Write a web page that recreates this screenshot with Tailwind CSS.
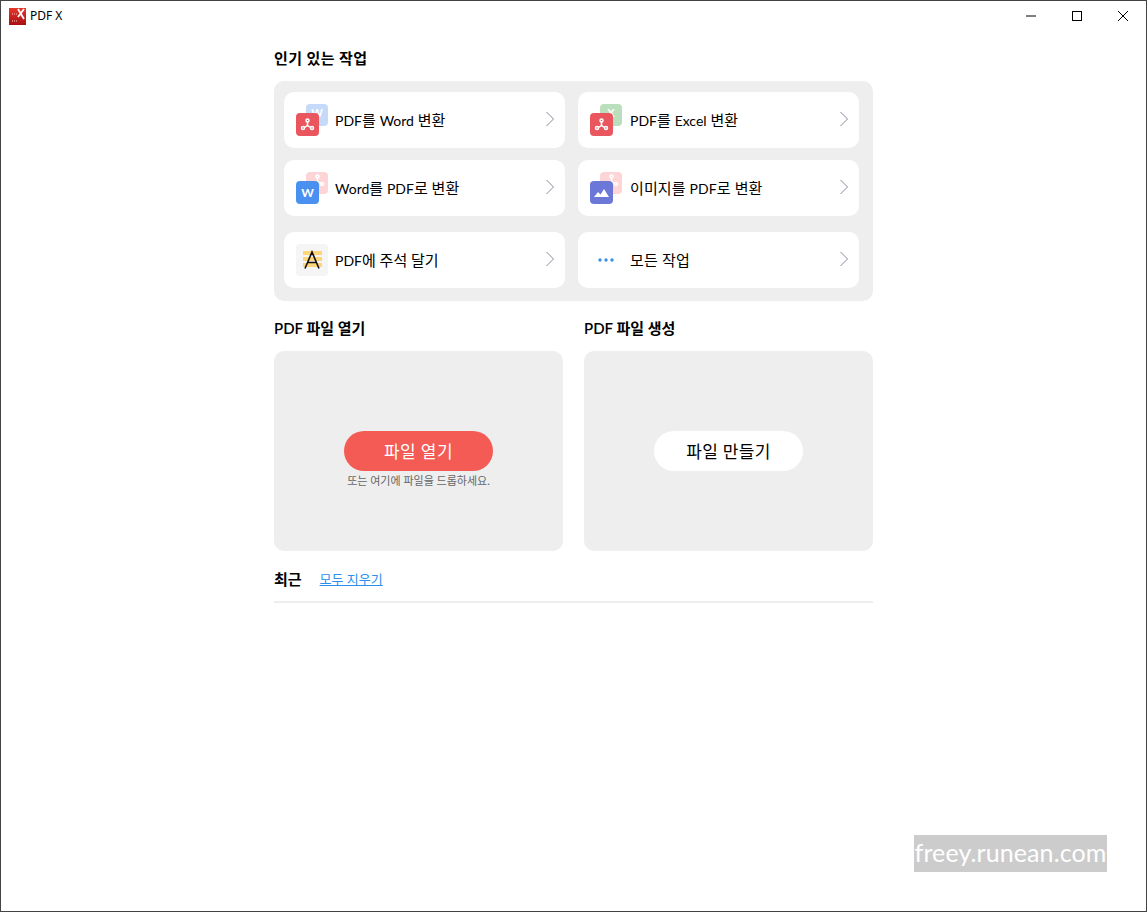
<!doctype html>
<html lang="ko">
<head>
<meta charset="utf-8">
<script src="https://cdn.jsdelivr.net/npm/@tailwindcss/browser@4"></script>
</head>
<body class="bg-white">
<div class="relative w-[1147px] h-[912px] overflow-hidden bg-white border border-[#444444] text-black font-['Lato','Noto_Sans_CJK_KR',sans-serif]">
  <header class="flex items-center h-[30px]">
    <svg class="ml-[8px] w-[17px] h-[17px]" viewBox="0 0 17 17">
      <defs><linearGradient id="g" x1="0" y1="0" x2="0" y2="1"><stop offset="0" stop-color="#e8352a"/><stop offset="1" stop-color="#a80f12"/></linearGradient></defs>
      <rect width="17" height="17" fill="url(#g)"/>
      <path d="M9 1l6 10M15 1L9 9" stroke="#fff" stroke-width="1.8" fill="none"/>
      <path d="M3 6h5M3 13h5" stroke="#f3c6c6" stroke-width="1.2" stroke-dasharray="1 1"/>
    </svg>
    <span class="ml-[4px] text-[12px] leading-[16px] font-['Noto_Sans']">PDF X</span>
    <div class="ml-auto flex items-center">
      <svg class="w-[46px] h-[30px]" viewBox="0 0 46 30"><path d="M18 15h10" stroke="#000" stroke-width="1"/></svg>
      <svg class="w-[46px] h-[30px]" viewBox="0 0 46 30"><rect x="18.5" y="10.5" width="9" height="9" fill="none" stroke="#000"/></svg>
      <svg class="w-[46px] h-[30px]" viewBox="0 0 46 30"><path d="M18 10l10 10M28 10l-10 10" stroke="#000" stroke-width="1"/></svg>
    </div>
  </header>

  <main class="ml-[273px] w-[599px]">
    <h2 class="mt-[17px] h-[20px] text-[15px] leading-[20px] font-semibold tracking-[0.4px]">인기 있는 작업</h2>
    <section class="mt-[13px] h-[220px] rounded-[10px] bg-[#eeeeee] px-[10px] pt-[11px] flex flex-col gap-[12px]">
      <div class="grid grid-cols-[281px_281px] gap-x-[13px]">
        <a class="h-[56px] rounded-[10px] bg-white flex items-center relative pl-[51px] pr-[10px] text-[15px]">
          <span class="absolute left-[22px] top-[12px] w-[22px] h-[22px] rounded-[4px] bg-[#c5d9f8] text-white text-[11px] font-bold text-center leading-[18px]">W</span>
          <span class="absolute left-[12px] top-[21px] w-[23px] h-[23px] rounded-[4px] bg-[#e9565e] flex items-center justify-center">
            <svg class="w-[15px] h-[15px]" viewBox="0 0 15 15" fill="none" stroke="#fff" stroke-width="1.5"><circle cx="7.5" cy="3.5" r="1.5"/><circle cx="3" cy="11" r="1.5"/><circle cx="12" cy="11" r="1.5"/><path d="M7.5 5v3.5M4.5 10.5l3-2 3 2"/></svg>
          </span>
          <span><span class="text-[14px]">PDF</span>를 <span class="text-[14px]">Word</span> 변환</span>
          <svg class="ml-auto mb-[3px] w-[10px] h-[16px]" viewBox="0 0 10 16" fill="none" stroke="#8a8a9a"><path d="M1.5 1l7 7-7 7"/></svg>
        </a>
        <a class="h-[56px] rounded-[10px] bg-white flex items-center relative pl-[52px] pr-[10px] text-[15px]">
          <span class="absolute left-[22px] top-[12px] w-[22px] h-[22px] rounded-[4px] bg-[#badfbc] text-white text-[11px] font-bold text-center leading-[18px]">X</span>
          <span class="absolute left-[12px] top-[21px] w-[23px] h-[23px] rounded-[4px] bg-[#e9565e] flex items-center justify-center">
            <svg class="w-[15px] h-[15px]" viewBox="0 0 15 15" fill="none" stroke="#fff" stroke-width="1.5"><circle cx="7.5" cy="3.5" r="1.5"/><circle cx="3" cy="11" r="1.5"/><circle cx="12" cy="11" r="1.5"/><path d="M7.5 5v3.5M4.5 10.5l3-2 3 2"/></svg>
          </span>
          <span><span class="text-[14px]">PDF</span>를 <span class="text-[14px]">Excel</span> 변환</span>
          <svg class="ml-auto mb-[3px] w-[10px] h-[16px]" viewBox="0 0 10 16" fill="none" stroke="#8a8a9a"><path d="M1.5 1l7 7-7 7"/></svg>
        </a>
      </div>
      <div class="grid grid-cols-[281px_281px] gap-x-[13px]">
        <a class="h-[56px] rounded-[10px] bg-white flex items-center relative pl-[51px] pr-[10px] text-[15px]">
          <span class="absolute left-[22px] top-[12px] w-[22px] h-[22px] rounded-[4px] bg-[#fdd5d6] flex items-start justify-center pt-[1px]">
            <svg class="w-[15px] h-[15px]" viewBox="0 0 15 15" fill="none" stroke="#fff" stroke-width="1.5"><circle cx="7.5" cy="3.5" r="1.5"/><circle cx="3" cy="11" r="1.5"/><circle cx="12" cy="11" r="1.5"/><path d="M7.5 5v3.5M4.5 10.5l3-2 3 2"/></svg>
          </span>
          <span class="absolute left-[12px] top-[21px] w-[23px] h-[23px] rounded-[4px] bg-[#4a90f0] text-white text-[12px] font-bold text-center leading-[23px]">W</span>
          <span><span class="text-[14px]">Word</span>를 <span class="text-[14px]">PDF</span>로 변환</span>
          <svg class="ml-auto mb-[3px] w-[10px] h-[16px]" viewBox="0 0 10 16" fill="none" stroke="#8a8a9a"><path d="M1.5 1l7 7-7 7"/></svg>
        </a>
        <a class="h-[56px] rounded-[10px] bg-white flex items-center relative pl-[52px] pr-[10px] text-[15px]">
          <span class="absolute left-[22px] top-[12px] w-[22px] h-[22px] rounded-[4px] bg-[#fdd5d6] flex items-start justify-center pt-[1px]">
            <svg class="w-[15px] h-[15px]" viewBox="0 0 15 15" fill="none" stroke="#fff" stroke-width="1.5"><circle cx="7.5" cy="3.5" r="1.5"/><circle cx="3" cy="11" r="1.5"/><circle cx="12" cy="11" r="1.5"/><path d="M7.5 5v3.5M4.5 10.5l3-2 3 2"/></svg>
          </span>
          <span class="absolute left-[12px] top-[21px] w-[23px] h-[23px] rounded-[4px] bg-[#6b78d8] flex items-center justify-center">
            <svg class="w-[17px] h-[17px]" viewBox="0 0 17 17" fill="#fff"><path d="M1 13l4-5 2.5 2.5L11 5l5 8z"/></svg>
          </span>
          <span class="tracking-[0.1px]">이미지를 <span class="text-[14px]">PDF</span>로 변환</span>
          <svg class="ml-auto mb-[3px] w-[10px] h-[16px]" viewBox="0 0 10 16" fill="none" stroke="#8a8a9a"><path d="M1.5 1l7 7-7 7"/></svg>
        </a>
      </div>
      <div class="mt-[4px] grid grid-cols-[281px_281px] gap-x-[13px]">
        <a class="h-[56px] rounded-[10px] bg-white flex items-center relative pl-[51px] pr-[10px] text-[15px]">
          <span class="absolute left-[12px] top-[12px] w-[32px] h-[32px] rounded-[4px] bg-[#f5f5f5] flex items-center justify-center">
            <svg class="w-[20px] h-[20px]" viewBox="0 0 20 20" fill="none"><path d="M1 1h19v4H1zM1 7h19v4H1zM1 13h19v4H1z" fill="#fdd67a"/><path d="M3 18.5L10 2l7 16.5M5.5 12.5h9" stroke="#111" stroke-width="1.6"/></svg>
          </span>
          <span><span class="text-[14px]">PDF</span>에 주석 달기</span>
          <svg class="ml-auto mb-[3px] w-[10px] h-[16px]" viewBox="0 0 10 16" fill="none" stroke="#8a8a9a"><path d="M1.5 1l7 7-7 7"/></svg>
        </a>
        <a class="h-[56px] rounded-[10px] bg-white flex items-center relative pl-[52px] pr-[10px] text-[15px]">
          <svg class="absolute left-[20px] top-[26px] w-[16px] h-[4px]" viewBox="0 0 16 4" fill="#3b8fe8"><circle cx="2" cy="2" r="1.7"/><circle cx="8" cy="2" r="1.7"/><circle cx="14" cy="2" r="1.7"/></svg>
          <span class="tracking-[0.2px]">모든 작업</span>
          <svg class="ml-auto mb-[3px] w-[10px] h-[16px]" viewBox="0 0 10 16" fill="none" stroke="#8a8a9a"><path d="M1.5 1l7 7-7 7"/></svg>
        </a>
      </div>
    </section>

    <div class="mt-[17px] grid grid-cols-[289px_289px] gap-x-[21px]">
      <div>
        <h2 class="h-[20px] text-[15px] leading-[20px] font-semibold">PDF 파일 열기</h2>
        <div class="mt-[13px] h-[200px] rounded-[10px] bg-[#eeeeee] flex flex-col items-center pt-[80px]">
          <button class="w-[149px] h-[40px] pt-[2px] rounded-full bg-[#f45b54] text-white text-[17px] tracking-[0.4px]">파일 열기</button>
          <p class="mt-[2px] text-[11px] leading-[15px] text-[#666666]">또는 여기에 파일을 드롭하세요.</p>
        </div>
      </div>
      <div>
        <h2 class="h-[20px] text-[15px] leading-[20px] font-semibold">PDF 파일 생성</h2>
        <div class="mt-[13px] h-[200px] rounded-[10px] bg-[#eeeeee] flex flex-col items-center pt-[80px]">
          <button class="w-[149px] h-[40px] pt-[2px] rounded-full bg-white text-black text-[17px] tracking-[0.3px]">파일 만들기</button>
        </div>
      </div>
    </div>

    <div class="mt-[18px] flex items-center h-[20px]">
      <h2 class="text-[15px] leading-[20px] font-semibold">최근</h2>
      <a class="ml-[18px] text-[13px] leading-[16px] text-[#2a8ff0] underline">모두 지우기</a>
    </div>
    <div class="mt-[12px] h-[2px] bg-[#eeeeee]"></div>
  </main>

  <div class="absolute left-[913px] top-[834px] w-[193px] h-[37px] bg-[#cccccc] text-white text-[25px] leading-[34px] whitespace-nowrap text-center font-['Lato'] tracking-[0.1px]">freey.runean.com</div>
</div>
</body>
</html>
